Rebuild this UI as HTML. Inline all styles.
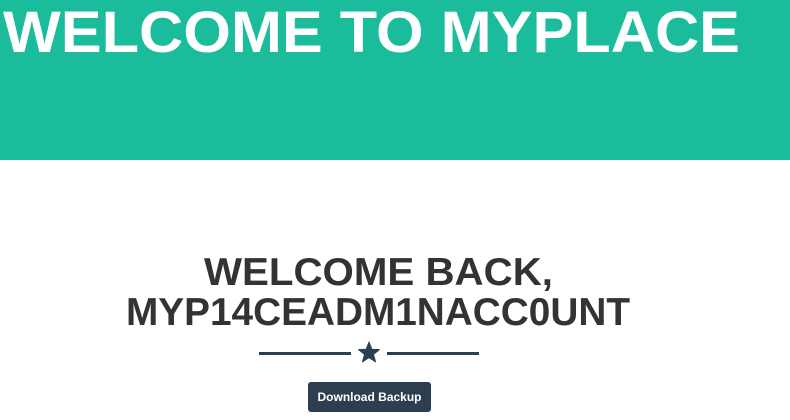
<!DOCTYPE html>
<html><head><meta charset="utf-8">
<style>
html,body{margin:0;padding:0;width:790px;height:420px;overflow:hidden;background:#fff;font-family:"Liberation Sans",sans-serif;}
.hdr{position:absolute;left:0;top:0;width:790px;height:160px;background:#1abc9c;}
svg{position:absolute;left:0;top:0;}
.btn{position:absolute;left:308px;top:382px;width:123px;height:30px;background:#2c3e50;border-radius:3px;color:#fff;font-size:12px;font-weight:bold;text-align:center;line-height:30px;}
</style></head><body>
<div class="hdr"></div>
<svg width="790" height="420" xmlns="http://www.w3.org/2000/svg">
<text x="3" y="52" font-family="Liberation Sans" font-weight="bold" font-size="58" fill="#fff" textLength="737" lengthAdjust="spacingAndGlyphs">WELCOME TO MYPLACE</text>
<text x="204" y="285" font-family="Liberation Sans" font-weight="bold" font-size="39" fill="#333" textLength="349" lengthAdjust="spacingAndGlyphs">WELCOME BACK,</text>
<text x="126" y="325" font-family="Liberation Sans" font-weight="bold" font-size="39" fill="#333" textLength="504" lengthAdjust="spacingAndGlyphs">MYP14CEADM1NACC0UNT</text>
<rect x="259" y="352" width="92" height="3" fill="#2c3e50"/>
<rect x="387" y="352" width="92" height="3" fill="#2c3e50"/>
<path d="M369,342 L371.8,349.2 L379.5,349.6 L373.5,354.4 L375.5,361.8 L369,357.6 L362.5,361.8 L364.5,354.4 L358.5,349.6 L366.2,349.2 Z" fill="#2c3e50" stroke="#2c3e50" stroke-width="1" stroke-linejoin="round"/>
</svg>
<div class="btn">Download Backup</div>
</body></html>
